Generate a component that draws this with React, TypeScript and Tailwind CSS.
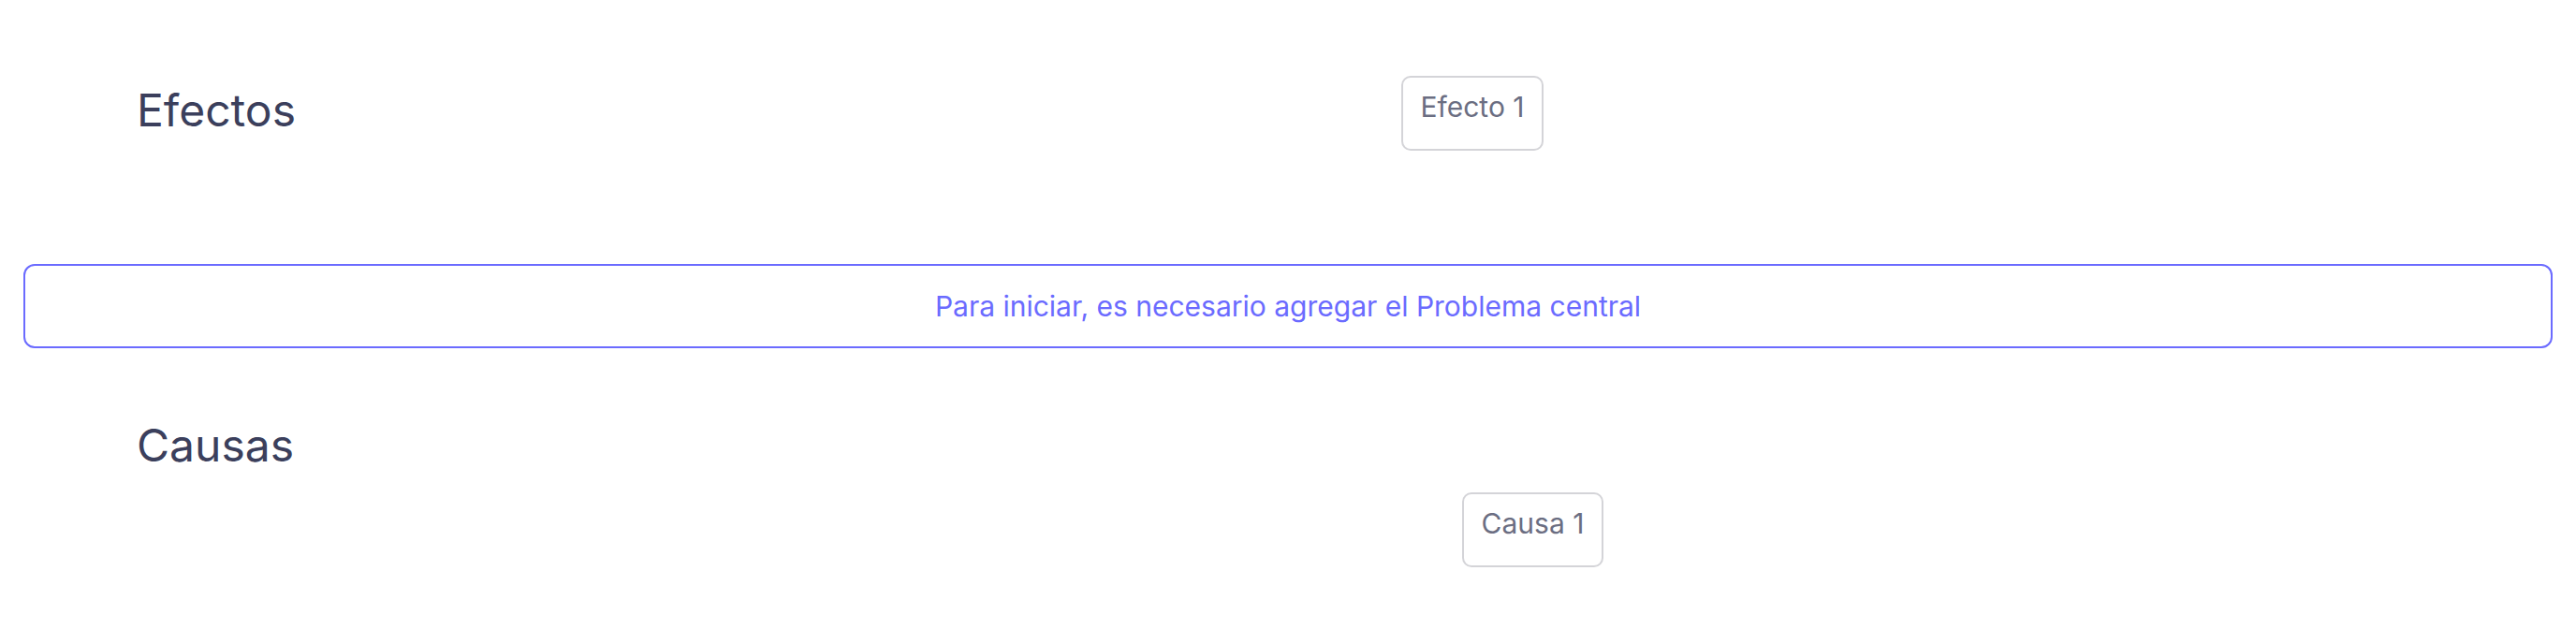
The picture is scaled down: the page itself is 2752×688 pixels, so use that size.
export default function App() {
    return (
        <div className="min-h-screen bg-white font-['Inter',sans-serif]">
            {/* Efectos */}
            <div className="grid grid-cols-[1497px_1fr] pt-[81px]">
                <h2 className="pl-[146px] mt-[13px] text-5xl text-[#3b3f5c]">Efectos</h2>
                <div className="w-[152px] h-[80px] pt-[13px] text-center border-2 border-[#d4d4d8] rounded-[10px] text-3xl text-[#6b6e82]">
                    Efecto 1
                </div>
            </div>

            {/* Problema central */}
            <div className="mx-[25px] mt-[121px] h-[90px] flex items-center justify-center border-2 border-[#6b6bff] rounded-xl">
                <span className="text-3xl text-[#6b6bff]">
                    Para iniciar, es necesario agregar el Problema central
                </span>
            </div>

            {/* Causas */}
            <h2 className="pl-[146px] mt-[80px] text-5xl text-[#3b3f5c]">Causas</h2>
            <div className="pl-[1562px] mt-[26px]">
                <div className="w-[151px] h-[80px] pt-[13px] text-center border-2 border-[#d4d4d8] rounded-[10px] text-3xl text-[#6b6e82]">
                    Causa 1
                </div>
            </div>
        </div>
    );
}
